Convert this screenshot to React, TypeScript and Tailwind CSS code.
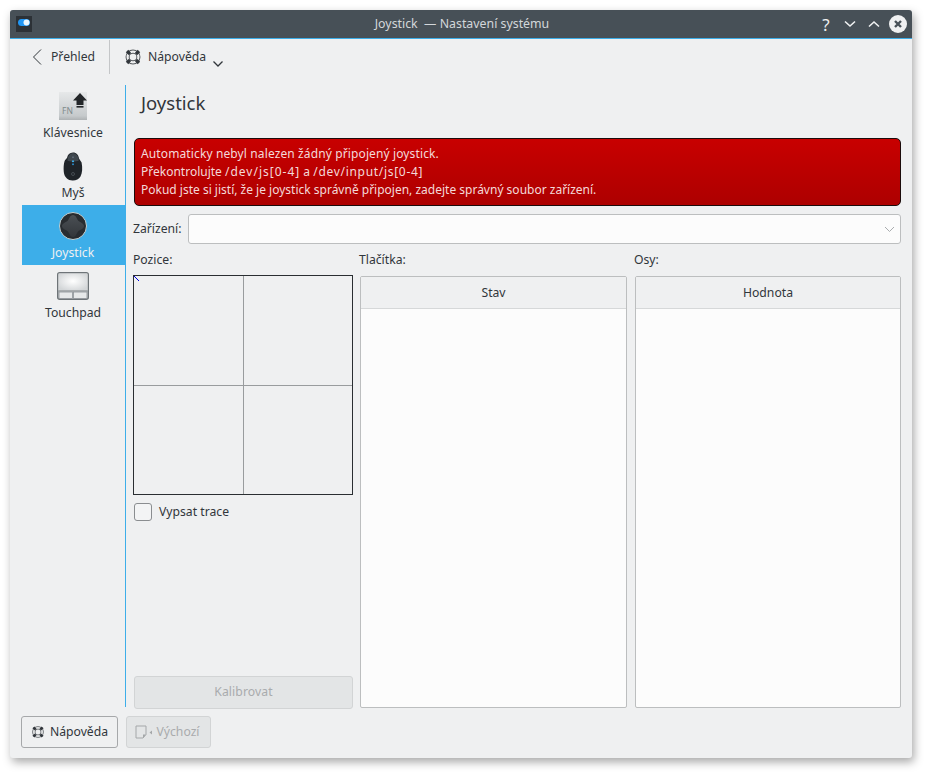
const fontStack = { fontFamily: '"Noto Sans", sans-serif' };

function HelpBuoy({ size = 16, color = "#31363b" }: { size?: number; color?: string }) {
  return (
    <svg width={size} height={size} viewBox="0 0 16 16" fill="none">
      <circle cx="8" cy="8" r="6.2" stroke={color} strokeWidth="0.9" opacity="0.8" />
      <circle cx="8" cy="8" r="3.4" stroke={color} strokeWidth="0.9" opacity="0.8" />
      <path d="M1.6 3.8 3.8 1.6 6.4 4.4 4.4 6.4ZM14.4 3.8 12.2 1.6 9.6 4.4 11.6 6.4ZM1.6 12.2 3.8 14.4 6.4 11.6 4.4 9.6ZM14.4 12.2 12.2 14.4 9.6 11.6 11.6 9.6Z" fill={color} />
    </svg>
  );
}

function KeyboardIcon() {
  return (
    <svg width="28" height="28" viewBox="0 0 28 28">
      <defs>
        <linearGradient id="keyface" x1="0" y1="0" x2="0" y2="1">
          <stop offset="0" stopColor="#e6e8e9" />
          <stop offset="0.85" stopColor="#c6cacc" />
          <stop offset="1" stopColor="#aeb2b4" />
        </linearGradient>
      </defs>
      <rect width="28" height="28" fill="url(#keyface)" />
      <text x="3" y="22" fontSize="8.5" fill="#7f8c8d" style={fontStack}>FN</text>
      <path d="M21 1 28 8.5H24.5V13H17.5V8.5H14Z" fill="#232629" />
      <rect x="17.5" y="14" width="7" height="1.6" fill="#232629" />
    </svg>
  );
}

function MouseIcon() {
  return (
    <svg width="20" height="29" viewBox="0 0 20 29">
      <path d="M10 0.5C13.5 0.5 15.5 3 16 6.5L18.6 10.5C19.6 16 19.4 21 17.5 24.5 15.8 27.6 13 28.6 9.5 28.5 5 28.4 1.4 25.6 0.8 20 0.4 16 0.6 12 1.6 9 2.4 7.6 3.4 6.8 4 6 4.6 2.6 6.6 0.5 10 0.5Z" fill="#1f2429" />
      <path d="M10 1C7 1.5 5 3.5 4.4 8.5 7 10 13 10 15.8 8.5 15.4 3.5 13 1.5 10 1Z" fill="#3f474e" />
      <rect x="9" y="4.5" width="2" height="1.6" fill="#5a6672" />
      <rect x="9" y="8.5" width="2" height="1.6" fill="#3daee9" />
      <rect x="9" y="11.5" width="2" height="1.6" fill="#2980b9" />
      <circle cx="10" cy="22" r="1.5" fill="none" stroke="#5d646b" strokeWidth="0.6" />
    </svg>
  );
}

function JoystickIcon() {
  return (
    <svg width="28" height="28" viewBox="0 0 28 28">
      <defs>
        <linearGradient id="stickface" x1="0" y1="0" x2="0" y2="1">
          <stop offset="0" stopColor="#4a4f54" />
          <stop offset="1" stopColor="#33373b" />
        </linearGradient>
      </defs>
      <circle cx="14" cy="14" r="13.5" fill="#282c30" stroke="#d4dedc" strokeWidth="0.9" />
      <path d="M14 3C17 3 17.8 7 19.5 9 21.5 10.5 25 11.5 25 14 25 17 21 17.5 19 19.5 17.5 21.5 17 25 14 25 11 25 10.5 21.5 9 19.5 7 17.5 3 17 3 14 3 11.5 6.5 10.5 8.5 9 10.2 7 11 3 14 3Z" fill="url(#stickface)" />
    </svg>
  );
}

function TouchpadIcon() {
  return (
    <svg width="32" height="28" viewBox="0 0 32 28">
      <defs>
        <radialGradient id="padface" cx="0.5" cy="0.45" r="0.6">
          <stop offset="0" stopColor="#ffffff" />
          <stop offset="1" stopColor="#d3d6d8" />
        </radialGradient>
      </defs>
      <rect x="0.75" y="0.75" width="30.5" height="26.5" rx="2" fill="#eff0f1" stroke="#6e7478" strokeWidth="1.5" />
      <rect x="1.5" y="1.5" width="29" height="17" fill="url(#padface)" />
      <path d="M1.5 19H30.5" stroke="#6e7478" strokeWidth="1" />
      <rect x="2" y="20" width="13.5" height="6.5" fill="#e6e8e9" stroke="#8b9094" strokeWidth="0.8" />
      <rect x="16.5" y="20" width="13.5" height="6.5" fill="#e6e8e9" stroke="#8b9094" strokeWidth="0.8" />
    </svg>
  );
}

function DefaultsIcon() {
  return (
    <svg width="20" height="14" viewBox="0 0 20 14" fill="none">
      <path d="M1 1H11V9.5L8 13H1Z" stroke="#a4a7a9" strokeWidth="1" />
      <path d="M11 9.5H8V13Z" fill="#a4a7a9" />
      <path d="M17 5.5 14.5 7.5 17 9.5Z" fill="#a4a7a9" />
    </svg>
  );
}

const navItems = [
  { label: "Klávesnice", icon: <KeyboardIcon />, active: false },
  { label: "Myš", icon: <MouseIcon />, active: false },
  { label: "Joystick", icon: <JoystickIcon />, active: true },
  { label: "Touchpad", icon: <TouchpadIcon />, active: false },
];

function ListPanel({ title }: { title: string }) {
  return (
    <div className="flex min-h-0 flex-1 flex-col overflow-hidden rounded-[2px] border border-[#bcbebf] bg-[#fcfcfc]">
      <div className="flex h-[32px] shrink-0 items-center justify-center border-b border-[#d6d8d9] bg-[#eff0f1] pt-[1px] text-[#31363b]">
        {title}
      </div>
    </div>
  );
}

function App() {
  return (
    <div className="h-[775px] w-[928px] overflow-hidden bg-white pl-[10px] pt-[10px] text-[12.2px] text-[#31363b]" style={fontStack}>
      <div className="flex h-[748px] w-[902px] flex-col overflow-hidden rounded-[3px] bg-[#eff0f1] shadow-[2px_4px_10px_rgba(0,0,0,0.35)]">
        <header className="flex h-[29px] shrink-0 items-center border-b border-[#3daee9] bg-[#475057]">
          <div className="flex flex-1 items-center pl-[6px]">
            <svg width="16" height="16" viewBox="0 0 16 16">
              <rect width="16" height="16" fill="#2c3136" />
              <rect x="2" y="3" width="12" height="7" rx="3.5" fill="#2196f3" />
              <circle cx="10.5" cy="6.5" r="3" fill="#eaf6fd" />
            </svg>
          </div>
          <div className="mr-[2px] text-center text-[12.35px] text-[#d3d7da]">Joystick &nbsp;— Nastavení systému</div>
          <div className="flex flex-1 items-center justify-end pr-[2px]">
            <span className="w-[24px] text-center text-[17px] leading-none text-[#eff0f1]">?</span>
            <div className="flex w-[24px] justify-center">
              <svg width="12" height="8" viewBox="0 0 12 8" fill="none">
                <path d="M1 1.5 6 6 11 1.5" stroke="#eff0f1" strokeWidth="1.6" />
              </svg>
            </div>
            <div className="flex w-[24px] justify-center">
              <svg width="12" height="8" viewBox="0 0 12 8" fill="none">
                <path d="M1 6.5 6 2 11 6.5" stroke="#eff0f1" strokeWidth="1.6" />
              </svg>
            </div>
            <div className="flex w-[24px] justify-center">
              <svg width="18" height="18" viewBox="0 0 18 18">
                <circle cx="9" cy="9" r="9" fill="#eff0f1" />
                <path d="M6 6 12 12M12 6 6 12" stroke="#475057" strokeWidth="2.4" />
              </svg>
            </div>
          </div>
        </header>

        <div className="flex h-[40px] shrink-0 items-center pb-[4px]">
          <div className="flex h-[34px] w-[100px] items-center border-r border-[#c4c6c8] pl-[21px]">
            <svg width="12" height="18" viewBox="0 0 12 18" fill="none">
              <path d="M10 1.5 2.5 9 10 16.5" stroke="#31363b" strokeWidth="1" />
            </svg>
            <span className="ml-[8px]">Přehled</span>
          </div>
          <div className="flex items-center pl-[14px]">
            <HelpBuoy size={18} />
            <span className="ml-[6px]">Nápověda</span>
            <svg className="ml-[6px] mt-[13px]" width="12" height="8" viewBox="0 0 12 8" fill="none">
              <path d="M1.5 1.5 6 6 10.5 1.5" stroke="#31363b" strokeWidth="1.3" />
            </svg>
          </div>
        </div>

        <div className="flex min-h-0 flex-1 pt-[6px]">
          <nav className="ml-[12px] flex h-[622px] w-[104px] shrink-0 flex-col border-r border-[#3daee9]">
            {navItems.map((item) => (
              <div
                key={item.label}
                className={`flex h-[60px] flex-col items-center pr-[1px] ${
                  item.active ? "bg-[#3daee9] text-[#eff0f1]" : ""
                }`}
              >
                <div className="mt-[7px] flex h-[28px] items-center justify-center">{item.icon}</div>
                <div className="mt-[4px] leading-[17px]">{item.label}</div>
              </div>
            ))}
          </nav>

          <main className="flex min-w-0 flex-1 flex-col pl-[8px] pr-[11px]">
            <h1 className="ml-[7px] h-[53px] pt-[3px] text-[18.5px] leading-[30px] text-[#31363b]">Joystick</h1>
            <div className="flex h-[68px] flex-col justify-center rounded-[5px] border border-[#1b0b0b] bg-gradient-to-b from-[#c80000] to-[#ad0000] px-[6px] text-[12px] leading-[18px] text-[#f4d9d9]">
              <p className="tracking-[0.12px]">Automaticky nebyl nalezen žádný připojený joystick.</p>
              <p>
                Překontrolujte <span className="tracking-[1px]">/dev/js[0-4]</span> a{" "}
                <span className="tracking-[0.7px]">/dev/input/js[0-4]</span>
              </p>
              <p>Pokud jste si jistí, že je joystick správně připojen, zadejte správný soubor zařízení.</p>
            </div>

            <div className="mt-[8px] flex h-[30px] items-center">
              <span className="-ml-[1px] w-[55px] shrink-0">Zařízení:</span>
              <div className="flex h-[30px] flex-1 items-center justify-end rounded-[3px] border border-[#bcbebf] bg-[#fcfcfc] pr-[5px]">
                <svg width="11" height="7" viewBox="0 0 11 7" fill="none">
                  <path d="M1 1 5.5 5.5 10 1" stroke="#a9acae" strokeWidth="1" />
                </svg>
              </div>
            </div>

            <div className="mt-[6px] flex h-[459px] min-h-0 gap-[7px]">
              <div className="-ml-[1px] flex w-[220px] shrink-0 flex-col">
                <div className="h-[25px] pt-[1px] leading-[17px]">Pozice:</div>
                <div className="relative grid h-[220px] w-[220px] grid-cols-[110px_1fr] grid-rows-[110px_1fr] border border-[#2a2e32]">
                  <div className="border-b border-r border-[#999c9e]" />
                  <div className="border-b border-[#999c9e]" />
                  <div className="border-r border-[#999c9e]" />
                  <div />
                  <svg className="absolute left-0 top-0" width="6" height="6" viewBox="0 0 6 6">
                    <path d="M0 0 5 5" stroke="#0000e0" strokeWidth="1" />
                  </svg>
                </div>
                <div className="mt-[8px] flex items-center pl-[1px]">
                  <div className="size-[18px] rounded-[3px] border border-[#8a8d90] bg-[#f3f4f5]" />
                  <span className="ml-[7px]">Vypsat trace</span>
                </div>
                <div className="ml-[1px] mt-auto flex h-[33px] items-center justify-center rounded-[3px] border border-[#d2d4d5] bg-[#e3e5e6] tracking-[0.1px] text-[#a9abad]">
                  Kalibrovat
                </div>
              </div>

              <div className="mr-[1px] flex w-[267px] shrink-0 flex-col">
                <div className="-ml-[1px] h-[26px] pt-[1px] leading-[17px]">Tlačítka:</div>
                <div className="flex min-h-0 flex-1 pb-[1px]">
                  <ListPanel title="Stav" />
                </div>
              </div>

              <div className="flex min-w-0 flex-1 flex-col">
                <div className="-ml-[1px] h-[26px] pt-[1px] leading-[17px]">Osy:</div>
                <div className="flex min-h-0 flex-1 pb-[1px]">
                  <ListPanel title="Hodnota" />
                </div>
              </div>
            </div>
          </main>
        </div>

        <footer className="flex h-[42px] shrink-0 items-start gap-[8px] pl-[11px]">
          <div className="flex h-[32px] w-[97px] items-center justify-center rounded-[3px] border border-[#a6a8aa] bg-[#eff0f1]">
            <HelpBuoy size={14} />
            <span className="ml-[5px]">Nápověda</span>
          </div>
          <div className="flex h-[32px] w-[85px] items-center justify-center rounded-[3px] border border-[#d2d4d5] bg-[#e3e5e6] pr-[2px] text-[#a9abad]">
            <DefaultsIcon />
            <span className="ml-[1px]">Výchozí</span>
          </div>
        </footer>
      </div>
    </div>
  );
}

export default App;
